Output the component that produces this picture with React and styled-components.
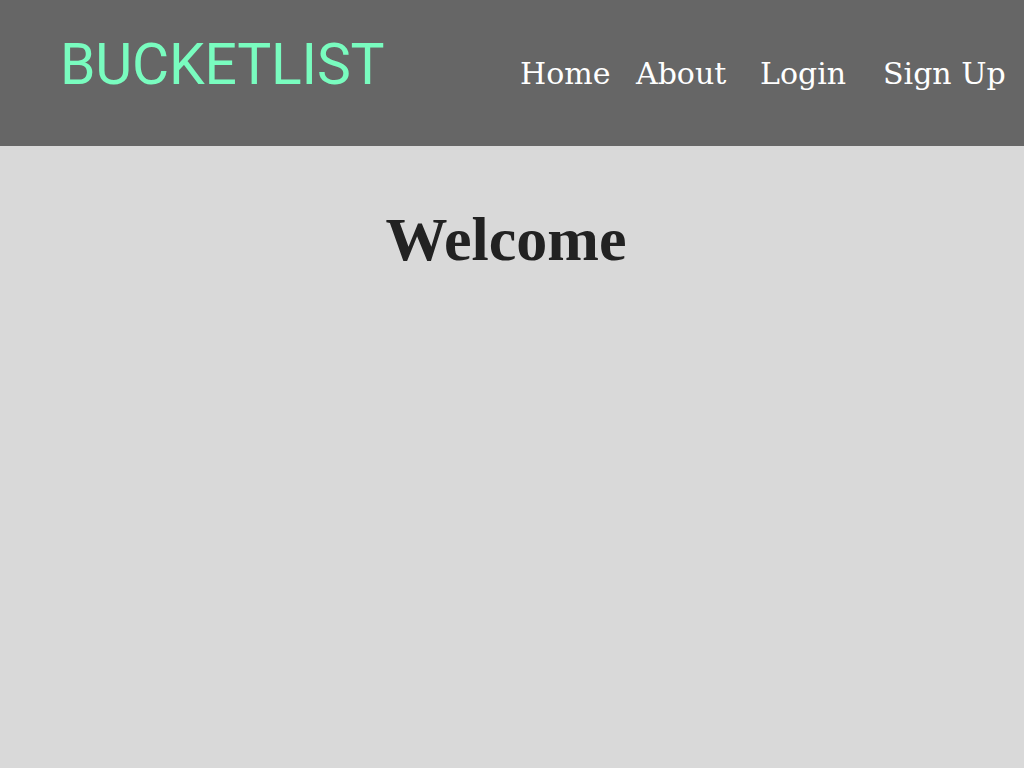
import React from "react";
import styled, { createGlobalStyle } from "styled-components";

const GlobalStyle = createGlobalStyle`
  html, body {
    margin: 0;
    padding: 0;
    background: #d9d9d9;
  }
  body {
    font-family: "DejaVu Serif", serif;
  }
`;

const Page = styled.div`
  min-height: 768px;
  background: #d9d9d9;
`;

const Header = styled.header`
  height: 146px;
  background: #666666;
  display: flex;
  align-items: baseline;
  padding: 36px 0 0 60px;
  box-sizing: border-box;
`;

const Logo = styled.div`
  font-family: Roboto, "Liberation Sans", sans-serif;
  font-size: 57px;
  line-height: 57px;
  letter-spacing: -0.2px;
  color: #79fcbf;
`;

const Nav = styled.nav`
  display: flex;
  align-items: baseline;
  margin-left: auto;
`;

const NavLink = styled.a`
  font-family: "DejaVu Serif", serif;
  font-size: 30px;
  color: #ffffff;
  text-decoration: none;
  width: ${(p) => p.$w}px;
  white-space: nowrap;
`;

const Main = styled.main`
  display: flex;
  justify-content: center;
  padding-top: 62px;
`;

const Title = styled.h1`
  margin: 0;
  margin-left: -12px;
  font-family: "Liberation Serif", serif;
  font-weight: 700;
  font-size: 62px;
  line-height: 1;
  color: #222222;
`;

export default function App() {
  return (
    <Page>
      <GlobalStyle />
      <Header>
        <Logo>BUCKETLIST</Logo>
        <Nav>
          <NavLink href="#" $w={116}>Home</NavLink>
          <NavLink href="#" $w={124}>About</NavLink>
          <NavLink href="#" $w={123}>Login</NavLink>
          <NavLink href="#" $w={141}>Sign Up</NavLink>
        </Nav>
      </Header>
      <Main>
        <Title>Welcome</Title>
      </Main>
    </Page>
  );
}
